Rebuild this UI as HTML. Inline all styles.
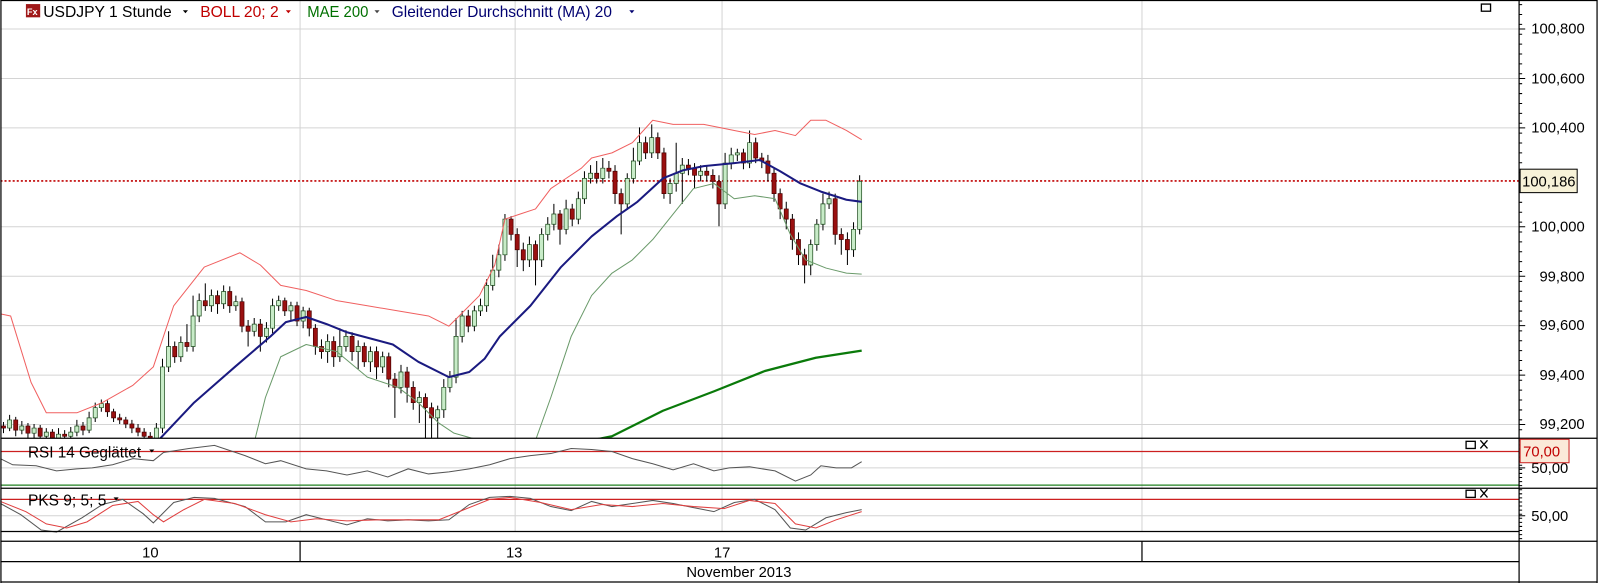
<!DOCTYPE html>
<html><head><meta charset="utf-8"><style>
html,body{margin:0;padding:0;background:#fff;overflow:hidden}
svg{display:block}
text{font-family:"Liberation Sans",Arial,sans-serif}
</style></head><body>
<svg width="1598" height="583" viewBox="0 0 1567 572" xmlns="http://www.w3.org/2000/svg">
<defs><clipPath id="cm"><rect x="0" y="0" width="1490" height="430"/></clipPath></defs>
<rect x="0" y="0" width="1567" height="572" fill="#fff"/>
<g stroke="#d4d4d4" stroke-width="1">
<line x1="0" y1="28.5" x2="1490" y2="28.5"/><line x1="0" y1="77" x2="1490" y2="77"/><line x1="0" y1="125.5" x2="1490" y2="125.5"/>
<line x1="0" y1="222.5" x2="1490" y2="222.5"/><line x1="0" y1="271" x2="1490" y2="271"/><line x1="0" y1="319.5" x2="1490" y2="319.5"/><line x1="0" y1="368" x2="1490" y2="368"/><line x1="0" y1="416.5" x2="1490" y2="416.5"/>
<line x1="294" y1="0" x2="294" y2="521"/><line x1="505" y1="0" x2="505" y2="521"/><line x1="708" y1="0" x2="708" y2="521"/><line x1="1120" y1="0" x2="1120" y2="521"/>
<line x1="0" y1="459" x2="1490" y2="459"/><line x1="0" y1="506" x2="1490" y2="506"/>
</g>
<line x1="0" y1="177.5" x2="1490" y2="177.5" stroke="#c00000" stroke-width="1.6" stroke-dasharray="2,2"/>
<g clip-path="url(#cm)">
<path fill="none" stroke="#000" stroke-width="1" d="M3,414V425M9,407V423M15,409V428M21,413V426M27,415V430M33,416V430M39,417V430M45,420V430M51,421V430M57,420V430M63,422V430M69,419V430M75,412V428M81,414V427M87,404V425M93,395V414M99,392V404M105,393V409M111,401V414M117,406V416M123,409V420M129,412V425M135,416V428M141,420V430M147,424V432M153,415V432M159,352V425M165,325V365M171,335V356M177,330V355M183,318V345M189,290V345M195,288V316M201,278V305M207,284V306M213,285V308M219,280V303M225,281V307M231,290V305M237,292V326M243,314V340M249,312V330M255,313V345M261,316V336M267,293V327M273,290V305M279,292V310M285,296V314M291,296V320M297,301V322M303,302V330M309,318V348M315,333V352M321,328V356M327,330V360M333,322V355M339,324V345M345,326V354M351,334V362M357,336V360M363,340V365M369,340V372M375,345V366M381,346V380M387,366V410M393,358V386M399,360V395M405,374V402M411,384V415M417,386V430M423,395V430M429,398V430M435,372V410M441,364V385M447,312V376M453,305V336M459,304V326M465,300V325M471,293V310M477,274V306M483,250V285M489,240V272M495,210V256M501,212V236M507,224V262M513,238V266M519,232V262M525,236V280M531,224V262M537,213V236M543,200V226M549,206V240M555,196V230M561,200V222M567,188V220M573,168V200M579,162V180M585,158V180M591,155V180M597,158V175M603,162V200M609,185V230M615,170V206M621,145V180M627,125V162M633,134V156M639,122V155M645,130V156M651,145V195M657,175V200M663,140V188M669,155V200M675,156V172M681,160V185M687,162V178M693,163V178M699,166V185M705,172V222M711,150V205M717,145V166M723,146V158M729,146V166M735,128V165M741,135V160M747,150V165M753,152V178M759,165V198M765,185V215M771,198V225M777,210V245M783,228V260M789,244V278M795,235V270M801,215V246M807,190V226M813,188V205M819,190V240M825,224V250M831,228V260M837,218V252M843,172V230"/>
<path fill="#9a1010" stroke="#4a0000" stroke-width="0.7" d="M1,418h4V420h-4zM13,412h4V422h-4zM25,418h4V425h-4zM37,420h4V428h-4zM49,424h4V430h-4zM61,426h4V428h-4zM79,418h4V422h-4zM103,396h4V404h-4zM109,404h4V410h-4zM115,410h4V412h-4zM121,412h4V416h-4zM127,416h4V420h-4zM133,420h4V424h-4zM139,424h4V428h-4zM145,428h4V432h-4zM169,340h4V350h-4zM181,336h4V340h-4zM199,295h4V300h-4zM211,290h4V298h-4zM223,286h4V300h-4zM235,296h4V320h-4zM241,320h4V325h-4zM253,318h4V330h-4zM277,295h4V305h-4zM289,300h4V315h-4zM301,305h4V322h-4zM307,322h4V340h-4zM313,340h4V345h-4zM325,335h4V350h-4zM343,330h4V345h-4zM355,340h4V355h-4zM367,345h4V360h-4zM379,350h4V372h-4zM385,372h4V380h-4zM397,365h4V380h-4zM403,380h4V395h-4zM415,390h4V400h-4zM421,400h4V410h-4zM457,310h4V320h-4zM499,215h4V230h-4zM505,230h4V245h-4zM511,245h4V255h-4zM523,240h4V255h-4zM547,210h4V225h-4zM559,205h4V215h-4zM583,170h4V175h-4zM595,165h4V168h-4zM601,168h4V190h-4zM607,190h4V200h-4zM631,140h4V150h-4zM643,135h4V150h-4zM649,150h4V190h-4zM673,162h4V165h-4zM679,165h4V172h-4zM691,168h4V172h-4zM697,172h4V178h-4zM703,178h4V200h-4zM727,150h4V160h-4zM739,140h4V155h-4zM745,155h4V158h-4zM751,158h4V170h-4zM757,170h4V190h-4zM763,190h4V205h-4zM769,205h4V215h-4zM775,215h4V235h-4zM781,235h4V250h-4zM787,250h4V260h-4zM817,195h4V230h-4zM823,230h4V235h-4zM829,235h4V245h-4z"/>
<path fill="#c8ecc8" stroke="#1a4a1a" stroke-width="0.7" d="M7,412h4V420h-4zM19,418h4V422h-4zM31,420h4V425h-4zM43,424h4V428h-4zM55,426h4V430h-4zM67,424h4V428h-4zM73,418h4V424h-4zM85,410h4V422h-4zM91,400h4V410h-4zM97,396h4V400h-4zM151,420h4V432h-4zM157,360h4V420h-4zM163,340h4V360h-4zM175,336h4V350h-4zM187,310h4V340h-4zM193,295h4V310h-4zM205,290h4V300h-4zM217,286h4V298h-4zM229,296h4V300h-4zM247,318h4V325h-4zM259,322h4V330h-4zM265,300h4V322h-4zM271,295h4V300h-4zM283,300h4V305h-4zM295,305h4V315h-4zM319,335h4V345h-4zM331,340h4V350h-4zM337,330h4V340h-4zM349,340h4V345h-4zM361,345h4V355h-4zM373,350h4V360h-4zM391,365h4V380h-4zM409,390h4V395h-4zM427,402h4V410h-4zM433,380h4V402h-4zM439,370h4V380h-4zM445,330h4V370h-4zM451,310h4V330h-4zM463,305h4V320h-4zM469,300h4V305h-4zM475,280h4V300h-4zM481,265h4V280h-4zM487,250h4V265h-4zM493,215h4V250h-4zM517,240h4V255h-4zM529,230h4V255h-4zM535,220h4V230h-4zM541,210h4V220h-4zM553,205h4V225h-4zM565,195h4V215h-4zM571,175h4V195h-4zM577,170h4V175h-4zM589,165h4V175h-4zM613,175h4V200h-4zM619,158h4V175h-4zM625,140h4V158h-4zM637,135h4V150h-4zM655,180h4V190h-4zM661,170h4V180h-4zM667,162h4V170h-4zM685,168h4V172h-4zM709,160h4V200h-4zM715,152h4V160h-4zM721,150h4V152h-4zM733,140h4V160h-4zM793,240h4V260h-4zM799,220h4V240h-4zM805,200h4V220h-4zM811,195h4V200h-4zM835,225h4V245h-4zM841,178h4V225h-4z"/>
<g fill="none" stroke-linejoin="round">
<path stroke="#f06060" stroke-width="1" d="M0,308 L10,310 L30,375 L45,405 L75,405 L100,395 L130,378 L150,360 L170,300 L200,262 L235,248 L255,260 L275,280 L300,285 L330,295 L360,300 L390,305 L420,310 L440,320 L450,310 L470,290 L485,260 L495,215 L510,210 L525,205 L540,185 L555,175 L570,165 L580,155 L600,150 L620,140 L640,118 L660,122 L690,122 L720,128 L740,132 L760,128 L780,133 L795,118 L810,118 L830,128 L845,137"/>
<path stroke="#6a9a6a" stroke-width="1" d="M250,430 L260,390 L275,350 L300,338 L330,345 L360,370 L390,380 L410,395 L430,415 L445,425 L470,432 L525,432 L540,390 L560,330 L580,290 L600,268 L620,255 L640,235 L660,210 L680,185 L700,180 L720,195 L740,192 L760,195 L775,230 L790,255 L810,263 L830,268 L845,269"/>
<path stroke="#0a7a0a" stroke-width="2.2" d="M580,432 L600,428 L650,403 L700,384 L750,364 L800,351 L845,344"/>
<path stroke="#1a1a80" stroke-width="2" d="M155,432 L190,395 L230,360 L265,330 L280,316 L300,311 L320,318 L340,326 L385,338 L410,355 L440,370 L460,365 L475,352 L490,330 L520,300 L550,262 L580,232 L605,212 L625,198 L650,175 L670,167 L690,163 L720,160 L745,157 L765,168 L785,180 L805,188 L830,196 L845,198"/>
</g>
</g>
<line x1="0" y1="443" x2="1490" y2="443" stroke="#cc2020" stroke-width="1.2"/>
<line x1="0" y1="476" x2="1490" y2="476" stroke="#208020" stroke-width="1.2"/>
<path fill="none" stroke="#555" stroke-width="1" d="M0,450 L12,456 L35,457 L55,462 L75,460 L90,459 L110,456 L130,450 L150,452 L160,444 L185,440 L210,437 L240,447 L260,455 L275,452 L300,460 L320,462 L340,466 L360,462 L380,468 L400,460 L420,465 L440,463 L460,460 L480,456 L500,450 L520,447 L540,445 L560,440 L580,441 L600,443 L620,450 L640,455 L660,461 L680,455 L700,462 L715,459 L735,458 L760,462 L780,472 L795,466 L805,457 L820,459 L835,459 L845,453"/>
<line x1="0" y1="490" x2="1490" y2="490" stroke="#cc2020" stroke-width="1.2"/>
<path fill="none" stroke="#555" stroke-width="1" d="M0,494 L20,505 L40,520 L55,522 L80,508 L100,495 L120,490 L140,504 L150,513 L170,493 L190,488 L210,489 L240,497 L260,512 L280,512 L300,505 L320,510 L340,515 L360,509 L380,511 L400,510 L420,511 L440,510 L460,495 L480,488 L500,487 L520,489 L540,497 L560,501 L580,492 L600,497 L620,494 L640,491 L660,494 L680,498 L700,502 L720,493 L740,490 L760,500 L775,518 L790,520 L810,508 L830,503 L845,500"/>
<path fill="none" stroke="#e04040" stroke-width="1" d="M0,492 L25,502 L45,514 L65,518 L85,512 L110,496 L135,492 L150,505 L160,512 L180,500 L200,490 L230,494 L260,505 L285,512 L310,509 L340,511 L370,510 L400,510 L430,510 L455,500 L480,490 L500,488 L530,493 L560,500 L590,495 L620,497 L650,494 L680,497 L710,499 L735,491 L760,494 L780,514 L800,518 L820,510 L845,502"/>
<g stroke="#000" stroke-width="1.2">
<line x1="0" y1="430" x2="1567" y2="430"/><line x1="0" y1="479" x2="1567" y2="479"/>
<line x1="0" y1="521.5" x2="1490" y2="521.5"/><line x1="0" y1="531" x2="1567" y2="531"/>
<line x1="0" y1="551" x2="1490" y2="551"/><line x1="0" y1="571" x2="1567" y2="571"/>
<line x1="1490" y1="0" x2="1490" y2="572"/>
<line x1="0.5" y1="0" x2="0.5" y2="572"/><line x1="1566.5" y1="0" x2="1566.5" y2="572"/>
<line x1="0" y1="0.5" x2="1567" y2="0.5"/>
<line x1="294" y1="531" x2="294" y2="551"/><line x1="1120" y1="531" x2="1120" y2="551"/>
</g>
<line x1="1491.5" y1="4" x2="1491.5" y2="430" stroke="#000" stroke-width="3" stroke-dasharray="1,8.7"/>
<line x1="1491.5" y1="432" x2="1491.5" y2="530" stroke="#000" stroke-width="3" stroke-dasharray="1,3"/>
<path stroke="#000" stroke-width="1" d="M1490,28.5h6M1490,77h6M1490,125.5h6M1490,222.5h6M1490,271h6M1490,319.5h6M1490,368h6M1490,416.5h6M1490,459h6M1490,506h6"/>
<rect x="25" y="4" width="14" height="13" fill="#a01818"/>
<text x="26" y="14.5" font-size="9" fill="#fff" font-weight="bold">Fx</text>
<g font-size="15.5">
<text x="42" y="16.5" fill="#000" textLength="126" lengthAdjust="spacingAndGlyphs">USDJPY 1 Stunde</text>
<text x="196" y="16.5" fill="#c00000" textLength="77" lengthAdjust="spacingAndGlyphs">BOLL 20; 2</text>
<text x="301" y="16.5" fill="#007000" textLength="60" lengthAdjust="spacingAndGlyphs">MAE 200</text>
<text x="384" y="16.5" fill="#000070" textLength="216" lengthAdjust="spacingAndGlyphs">Gleitender Durchschnitt (MA) 20</text>
</g>
<g fill="#000"><path d="M179,10h5l-2.5,3z"/><path d="M280,10h5l-2.5,3z" fill="#c00000"/><path d="M367,10h5l-2.5,3z" fill="#444"/><path d="M617,10h5l-2.5,3z" fill="#000070"/>
<path d="M146,441h5l-2.5,3z"/><path d="M111,488h5l-2.5,3z"/></g>
<text x="27" y="449" font-size="15" fill="#000" textLength="111" lengthAdjust="spacingAndGlyphs">RSI 14 Geglättet</text>
<text x="27" y="496" font-size="15" fill="#000" textLength="77" lengthAdjust="spacingAndGlyphs">PKS 9; 5; 5</text>
<g fill="none" stroke="#000" stroke-width="1.3">
<rect x="1453" y="4" width="9" height="7"/>
<rect x="1438" y="433" width="9" height="7"/><path d="M1452,432 L1459,440 M1459,432 L1452,440"/>
<rect x="1438" y="481" width="9" height="7"/><path d="M1452,480 L1459,488 M1459,480 L1452,488"/>
</g>
<g font-size="14.5" fill="#000">
<text x="1502" y="33">100,800</text><text x="1502" y="82">100,600</text><text x="1502" y="130">100,400</text>
<text x="1502" y="227">100,000</text><text x="1510" y="276">99,800</text><text x="1510" y="324">99,600</text><text x="1510" y="373">99,400</text><text x="1510" y="421">99,200</text>
<text x="1502" y="464">50,00</text><text x="1502" y="511">50,00</text>
<text x="139" y="547">10</text><text x="496" y="547">13</text><text x="700" y="547">17</text>
<text x="673" y="566">November 2013</text>
</g>
<rect x="1491" y="166" width="56" height="23" fill="#f7f2d8" stroke="#000" stroke-width="1"/>
<text x="1493" y="183" font-size="14.5" fill="#000">100,186</text>
<rect x="1491" y="431" width="48" height="23" fill="#fbe9d8" stroke="#cc2020" stroke-width="1"/>
<text x="1494" y="448" font-size="14.5" fill="#c00000">70,00</text>
</svg>
</body></html>
